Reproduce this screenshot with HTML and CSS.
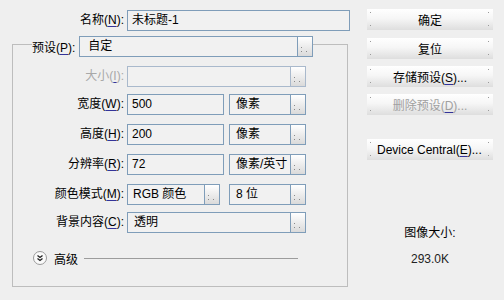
FILE: index.html
```html
<!DOCTYPE html>
<html lang="zh-CN">
<head>
  <meta charset="UTF-8">
  <title>新建</title>
  <link rel="stylesheet" href="styles.css">
</head>
<body>
  <div class="dialog">
    <div class="main">
      <div class="name-row">
        <label class="lbl">名称(<u>N</u>):</label>
        <div class="field name-field">未标题-1</div>
      </div>

      <fieldset class="preset">
        <legend>
          <span>预设(<u>P</u>):</span>
          <div class="select w-preset"><span class="val">自定</span><span class="drop"></span></div>
        </legend>

        <div class="row">
          <label class="lbl off">大小(<u>I</u>):</label>
          <div class="select w-size off"><span class="val"></span><span class="drop"></span></div>
        </div>
        <div class="row">
          <label class="lbl">宽度(<u>W</u>):</label>
          <div class="field w-num">500</div>
          <div class="select w-unit"><span class="val">像素</span><span class="drop"></span></div>
        </div>
        <div class="row wide">
          <label class="lbl">高度(<u>H</u>):</label>
          <div class="field w-num">200</div>
          <div class="select w-unit"><span class="val">像素</span><span class="drop"></span></div>
        </div>
        <div class="row wide">
          <label class="lbl">分辨率(<u>R</u>):</label>
          <div class="field w-num">72</div>
          <div class="select w-unit"><span class="val">像素/英寸</span><span class="drop"></span></div>
        </div>
        <div class="row wide">
          <label class="lbl">颜色模式(<u>M</u>):</label>
          <div class="select w-mode"><span class="val">RGB 颜色</span><span class="drop"></span></div>
          <div class="select w-unit w-bits"><span class="val">8 位</span><span class="drop"></span></div>
        </div>
        <div class="row">
          <label class="lbl">背景内容(<u>C</u>):</label>
          <div class="select w-size"><span class="val">透明</span><span class="drop"></span></div>
        </div>

        <div class="advanced">
          <span class="chev">
            <svg width="14" height="14" viewBox="0 0 14 14">
              <circle cx="7" cy="7" r="6.5" fill="#fafafa" stroke="#9a9a9a"/>
              <path d="M4.5 4.5 L7 6.5 L9.5 4.5 M4.5 7.5 L7 9.5 L9.5 7.5" fill="none" stroke="#222" stroke-width="1.3"/>
            </svg>
          </span>
          <span class="adv-text">高级</span>
          <span class="adv-line"></span>
        </div>
      </fieldset>
    </div>

    <div class="side">
      <button class="btn">确定</button>
      <button class="btn">复位</button>
      <button class="btn">存储预设(<u>S</u>)...</button>
      <button class="btn off">删除预设(<u>D</u>)...</button>
      <button class="btn device">Device Central(<u>E</u>)...</button>
      <div class="size-info">
        <div>图像大小:</div>
        <div class="size-val">293.0K</div>
      </div>
    </div>
  </div>
</body>
</html>
```

FILE: styles.css
```css
body {
  margin: 0;
  background-color: #efefef;
  font-family: "Liberation Sans", "Noto Sans CJK SC", sans-serif;
  font-size: 12px;
  color: #000;
  width: 504px;
  height: 300px;
  overflow: hidden;
}
u {
  text-decoration-color: #333399;
  text-underline-offset: 2px;
}
.dialog {
  display: flex;
  gap: 17px;
}
.main {
  width: 350px;
}

/* labels and fields */
.lbl {
  width: 124px;
  text-align: right;
  line-height: 21px;
  white-space: nowrap;
}
.lbl.off,
.off .lbl {
  color: #a8a8a8;
}
.field,
.select {
  box-sizing: border-box;
  height: 21px;
  border: 1px solid #7f9db9;
  background-color: #f1f1f1;
  line-height: 19px;
  white-space: nowrap;
}
.field {
  padding-left: 4px;
}
.select {
  display: flex;
}
.select .val {
  flex: 1;
  padding-left: 6px;
}
.select .drop {
  width: 14px;
  border-left: 1px solid #7f9db9;
  background:
    radial-gradient(circle, #8a8a8a 0.8px, transparent 1px) 2px 9px / 3px 3px no-repeat,
    radial-gradient(circle, #8a8a8a 0.8px, transparent 1px) 2px 13px / 3px 3px no-repeat,
    radial-gradient(circle, #8a8a8a 0.8px, transparent 1px) 7px 13px / 3px 3px no-repeat,
    linear-gradient(#ffffff, #dadada);
}
.select.off {
  border-color: #a9b9cc;
}
.select.off .drop {
  border-left-color: #a9b9cc;
}

/* name row */
.name-row {
  display: flex;
  gap: 3px;
  margin-top: 10px;
}
.name-field {
  width: 223px;
}

/* preset group */
.preset {
  box-sizing: border-box;
  width: 336px;
  margin: 1px 0 0 12px;
  padding: 0 0 20px 20px;
  border: 1px solid #bdbdbd;
}
.preset legend {
  display: flex;
  align-items: center;
  gap: 4px;
  padding: 4px 0 0 0;
  margin-left: -1px;
}
.w-preset { width: 234px; }
.w-preset .val { padding-left: 8px; }

.row {
  display: flex;
  margin-left: -33px;
  margin-top: 9px;
}
.row + .row { margin-top: 7px; }
.row.wide { margin-top: 9px; }
.row .lbl { margin-right: 3px; }
.w-size { width: 179px; }
.w-num { width: 97px; margin-right: 5px; }
.w-unit { width: 77px; }
.w-mode { width: 93px; margin-right: 9px; }
.w-mode .val { padding-left: 5px; }

/* advanced toggle */
.advanced {
  display: flex;
  align-items: center;
  height: 16px;
  margin-top: 17px;
}
.chev {
  display: flex;
  width: 14px;
  height: 14px;
}
.adv-text {
  margin-left: 7px;
}
.adv-line {
  width: 214px;
  height: 1px;
  margin-left: 6px;
  background-color: #9c9c9c;
}

/* right column buttons */
.side {
  width: 126px;
  display: flex;
  flex-direction: column;
  padding-top: 9px;
}
.btn {
  height: 21px;
  padding: 0;
  margin-bottom: 7px;
  border: none;
  font: inherit;
  color: #000;
  background:
    linear-gradient(#9a9a9a, #9a9a9a) 3px 3px / 1px 1px no-repeat,
    linear-gradient(#9a9a9a, #9a9a9a) 3px 16px / 1px 1px no-repeat,
    linear-gradient(#9a9a9a, #9a9a9a) 121px 3px / 1px 1px no-repeat,
    linear-gradient(#9a9a9a, #9a9a9a) 121px 16px / 1px 1px no-repeat,
    linear-gradient(#ffffff 0%, #f6f6f6 45%, #dedede 100%);
}
.btn:first-child { margin-bottom: 8px; }
.btn.off { color: #a0a0a0; }
.btn.device {
  margin-top: 17px;
  text-align: left;
  padding-left: 10px;
}
.size-info {
  margin-top: 58px;
  text-align: center;
  line-height: 16px;
}
.size-val {
  margin-top: 10px;
  color: #222;
}
```
